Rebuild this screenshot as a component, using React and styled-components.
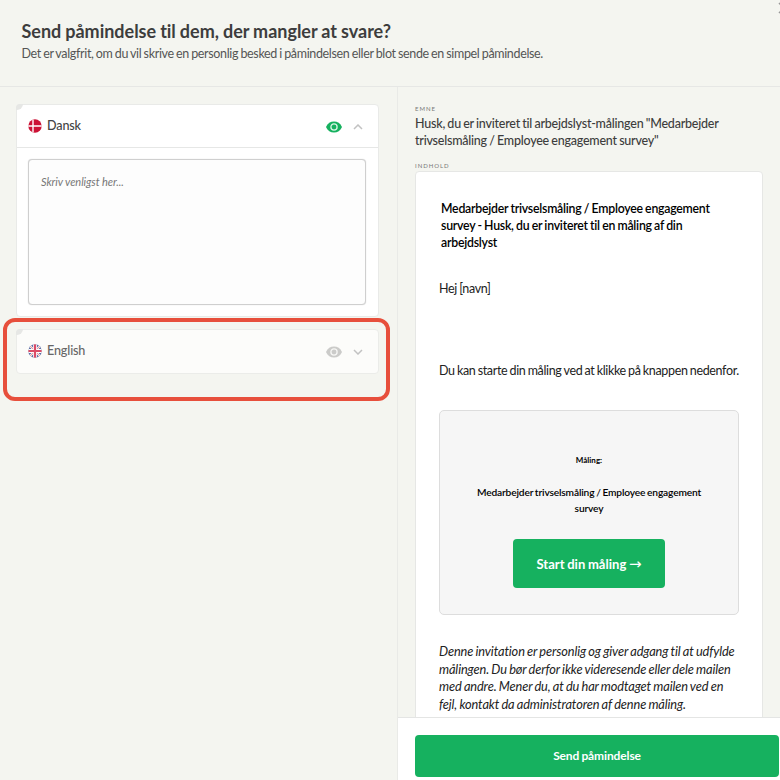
import { useState } from "react";
import styled, { createGlobalStyle } from "styled-components";

const GlobalStyle = createGlobalStyle`
  * {
    box-sizing: border-box;
  }
  body {
    margin: 0;
    background: #f4f5f0;
    font-family: Lato, sans-serif;
    font-variant-ligatures: none;
    color: #3d3d3d;
  }
  h1, h2, p {
    margin: 0;
  }
`;

const Page = styled.div`
  width: 780px;
  height: 780px;
  display: flex;
  flex-direction: column;
  overflow: hidden;
  position: relative;
`;

const Header = styled.header`
  flex: 0 0 87px;
  padding: 20px 0 0 21.5px;
  border-bottom: 1px solid #e6e7e5;
`;

const Title = styled.h1`
  font-size: 18px;
  line-height: 23px;
  font-weight: 700;
  letter-spacing: -0.02px;
  word-spacing: -0.3px;
  white-space: nowrap;
`;

const Subtitle = styled.p`
  margin-top: 1px;
  font-size: 12.5px;
  line-height: 20px;
  letter-spacing: -0.34px;
  word-spacing: -0.6px;
  color: #555;
  white-space: nowrap;
`;

const CloseButton = styled.button`
  position: absolute;
  top: 2px;
  left: 778px;
  width: 12px;
  height: 12px;
  padding: 0;
  border: 0;
  background: none;
  svg {
    display: block;
  }
`;

const Columns = styled.div`
  flex: 1;
  min-height: 0;
  display: grid;
  grid-template-columns: 398px 382px;
`;

const Languages = styled.div`
  display: flex;
  flex-direction: column;
  gap: 12px;
  padding: 17px 18px 0 16px;
  border-right: 1px solid #e9eae7;
`;

const Card = styled.section`
  position: relative;
  background: ${({ $open }) => ($open ? "#fff" : "#fcfcfa")};
  border: 1px solid ${({ $open }) => ($open ? "#e9eae8" : "#ebece9")};
  border-radius: 4px;
  &::before {
    content: "";
    position: absolute;
    top: -1px;
    left: -1px;
    width: 7px;
    height: 6px;
    background: #e6e7e5;
    border-radius: 4px 0 6px 0;
  }
`;

const CardHeader = styled.div`
  height: ${({ $open }) => ($open ? 42 : 43)}px;
  display: flex;
  align-items: center;
  padding: 0 15px 1px 11px;
  cursor: pointer;
  svg {
    flex: none;
  }
`;

const Language = styled.span`
  flex: 1;
  margin-left: 5px;
  font-size: 12.6px;
  line-height: 16px;
  font-weight: 500;
  letter-spacing: -0.15px;
  color: ${({ $open }) => ($open ? "#444" : "#666")};
`;

const Icons = styled.div`
  display: flex;
  align-items: center;
  gap: 11px;
  padding-top: 2px;
`;

const CardBody = styled.div`
  height: 169px;
  padding: 11px 12px 12px 11px;
  border-top: 1px solid #e6e7e6;
`;

const Message = styled.textarea`
  display: block;
  width: 100%;
  height: 146px;
  padding: 14px 12px;
  resize: none;
  border: 1px solid #cfcfcf;
  border-radius: 4px;
  box-shadow: 0 0 1px #ccc;
  background: #fdfdfd;
  font: italic 11px/15px Lato, sans-serif;
  letter-spacing: -0.05px;
  &::placeholder {
    color: #777;
  }
`;

const Highlight = styled.div`
  position: absolute;
  left: 3px;
  top: 318px;
  width: 387px;
  height: 83px;
  border: 4px solid #e74f3c;
  border-radius: 12px;
  pointer-events: none;
`;

const Preview = styled.div`
  min-height: 0;
  display: flex;
  flex-direction: column;
`;

const Scroll = styled.div`
  flex: 1;
  min-height: 0;
  overflow: hidden;
  padding: 17px 17px 0;
`;

const Label = styled.div`
  font-size: 6px;
  line-height: 10px;
  letter-spacing: 0.95px;
  text-transform: uppercase;
  color: #777;
`;

const Subject = styled.h2`
  margin: 1px 0 11px;
  font-size: 12.5px;
  line-height: 17.3px;
  font-weight: 500;
  letter-spacing: -0.23px;
  word-spacing: -0.6px;
  white-space: nowrap;
`;

const Mail = styled.div`
  width: 348px;
  height: 600px;
  padding: 28px 23px 0;
  background: #fff;
  border: 1px solid #e6e7e5;
  border-radius: 4px;
  color: #000;
`;

const MailTitle = styled.h2`
  padding-left: 2px;
  font-size: 12.3px;
  line-height: 17.3px;
  font-weight: 600;
  letter-spacing: -0.24px;
  word-spacing: -0.5px;
  white-space: nowrap;
`;

const Paragraph = styled.p`
  margin-top: ${({ $top }) => $top}px;
  font-size: 12.5px;
  line-height: 17.5px;
  letter-spacing: -0.35px;
  word-spacing: -0.6px;
  color: #222;
  white-space: nowrap;
`;

const Disclaimer = styled(Paragraph)`
  font-size: 12.8px;
  font-style: italic;
  letter-spacing: -0.12px;
  word-spacing: -0.6px;
`;

const SurveyBox = styled.div`
  width: 300px;
  height: 205px;
  margin-top: 31px;
  display: flex;
  flex-direction: column;
  align-items: center;
  padding-top: 43px;
  background: #f6f6f6;
  border: 1px solid #ddd;
  border-radius: 5px;
  text-align: center;
`;

const SurveyLabel = styled.p`
  font-size: 8px;
  line-height: 12px;
  font-weight: 700;
`;

const SurveyName = styled.p`
  margin-top: 19px;
  font-size: 10.2px;
  line-height: 15.5px;
  font-weight: 600;
  letter-spacing: -0.15px;
  word-spacing: -0.6px;
  white-space: nowrap;
`;

const Button = styled.button`
  display: block;
  width: ${({ $width }) => $width}px;
  height: ${({ $height }) => $height}px;
  padding: 0;
  border: 0;
  border-radius: 4px;
  background: #16b15f;
  color: #fff;
  font: 700 ${({ $size }) => $size}px/18px Lato, sans-serif;
  letter-spacing: -0.12px;
  word-spacing: -0.6px;
  white-space: nowrap;
`;

const StartButton = styled(Button)`
  margin-top: 23px;
  letter-spacing: 0.04px;
`;

const Arrow = styled.span`
  font-family: "DejaVu Sans", sans-serif;
  font-size: 15px;
  line-height: 1;
  font-weight: 400;
`;

const Footer = styled.footer`
  flex: 0 0 63px;
  padding: 17px 0 0 17px;
  background: #fff;
  border-top: 1px solid #e4e5e4;
`;

function DanishFlag() {
  return (
    <svg width="14" height="14" viewBox="0 0 14 14">
      <circle cx="7" cy="7" r="6.7" fill="#cc1336" />
      <path d="M5 .7V13.3M.3 7H13.7" stroke="#fff" strokeWidth="1.4" />
    </svg>
  );
}

function BritishFlag() {
  return (
    <svg width="14" height="14" viewBox="0 0 14 14" opacity="0.75">
      <defs>
        <clipPath id="gb">
          <circle cx="7" cy="7" r="6.7" />
        </clipPath>
      </defs>
      <g clipPath="url(#gb)">
        <path d="M0 0h14v14H0z" fill="#2d4189" />
        <path d="M1 1l12 12M13 1L1 13" stroke="#fff" strokeWidth="1.8" />
        <path d="M1 1l12 12M13 1L1 13" stroke="#d22" strokeWidth=".6" />
        <path d="M7 0v14M0 7h14" stroke="#fff" strokeWidth="3.8" />
        <path d="M7 0v14M0 7h14" stroke="#d01035" strokeWidth="2.2" />
      </g>
    </svg>
  );
}

function EyeIcon({ color, inner }) {
  return (
    <svg width="16" height="12" viewBox="0 0 16 12">
      <path d="M0 6C1.7 2.3 4.5.5 8 .5S14.3 2.3 16 6C14.3 9.7 11.5 11.5 8 11.5S1.7 9.7 0 6Z" fill={color} />
      <circle cx="8" cy="6" r="3.1" fill="none" stroke={inner} strokeWidth="1.3" />
    </svg>
  );
}

function Chevron({ up }) {
  return (
    <svg width="10" height="6" viewBox="0 0 10 6" fill="none" stroke="#c2c2c2" strokeWidth="1.5">
      <path d={up ? "M1 5L5 1L9 5" : "M1 1L5 5L9 1"} />
    </svg>
  );
}

function LanguageCard({ name, flag, open, children }) {
  return (
    <Card $open={open}>
      <CardHeader $open={open}>
        {flag}
        <Language $open={open}>{name}</Language>
        <Icons>
          <EyeIcon color={open ? "#16b15f" : "#cbcbc9"} inner={open ? "#d8f3e4" : "#f6f6f4"} />
          <Chevron up={open} />
        </Icons>
      </CardHeader>
      {open && <CardBody>{children}</CardBody>}
    </Card>
  );
}

export default function App() {
  const [message, setMessage] = useState("");

  return (
    <>
      <GlobalStyle />
      <Page>
        <Header>
          <Title>Send påmindelse til dem, der mangler at svare?</Title>
          <Subtitle>
            Det er valgfrit, om du vil skrive en personlig besked i påmindelsen eller blot sende en simpel påmindelse.
          </Subtitle>
        </Header>
        <CloseButton aria-label="Luk">
          <svg width="12" height="12" viewBox="0 0 12 12" stroke="#999" strokeWidth="1.5">
            <path d="M1 1L11 11M11 1L1 11" />
          </svg>
        </CloseButton>
        <Columns>
          <Languages>
            <LanguageCard name="Dansk" flag={<DanishFlag />} open>
              <Message
                placeholder="Skriv venligst her..."
                value={message}
                onChange={ev => setMessage(ev.target.value)}
              />
            </LanguageCard>
            <LanguageCard name="English" flag={<BritishFlag />} />
          </Languages>
          <Preview>
            <Scroll>
              <Label>Emne</Label>
              <Subject>
                Husk, du er inviteret til arbejdslyst-målingen "Medarbejder
                <br />
                trivselsmåling / Employee engagement survey"
              </Subject>
              <Label>Indhold</Label>
              <Mail>
                <MailTitle>
                  Medarbejder trivselsmåling / Employee engagement
                  <br />
                  survey - Husk, du er inviteret til en måling af din
                  <br />
                  arbejdslyst
                </MailTitle>
                <Paragraph $top={29}>Hej [navn]</Paragraph>
                <Paragraph $top={64}>Du kan starte din måling ved at klikke på knappen nedenfor.</Paragraph>
                <SurveyBox>
                  <SurveyLabel>Måling:</SurveyLabel>
                  <SurveyName>
                    Medarbejder trivselsmåling / Employee engagement
                    <br />
                    survey
                  </SurveyName>
                  <StartButton $width={152} $height={49} $size={13}>
                    Start din måling <Arrow>→</Arrow>
                  </StartButton>
                </SurveyBox>
                <Disclaimer $top={28}>
                  Denne invitation er personlig og giver adgang til at udfylde
                  <br />
                  målingen. Du bør derfor ikke videresende eller dele mailen
                  <br />
                  med andre. Mener du, at du har modtaget mailen ved en
                  <br />
                  fejl, kontakt da administratoren af denne måling.
                </Disclaimer>
              </Mail>
            </Scroll>
            <Footer>
              <Button $width={364} $height={42} $size={12}>Send påmindelse</Button>
            </Footer>
          </Preview>
        </Columns>
        <Highlight />
      </Page>
    </>
  );
}
